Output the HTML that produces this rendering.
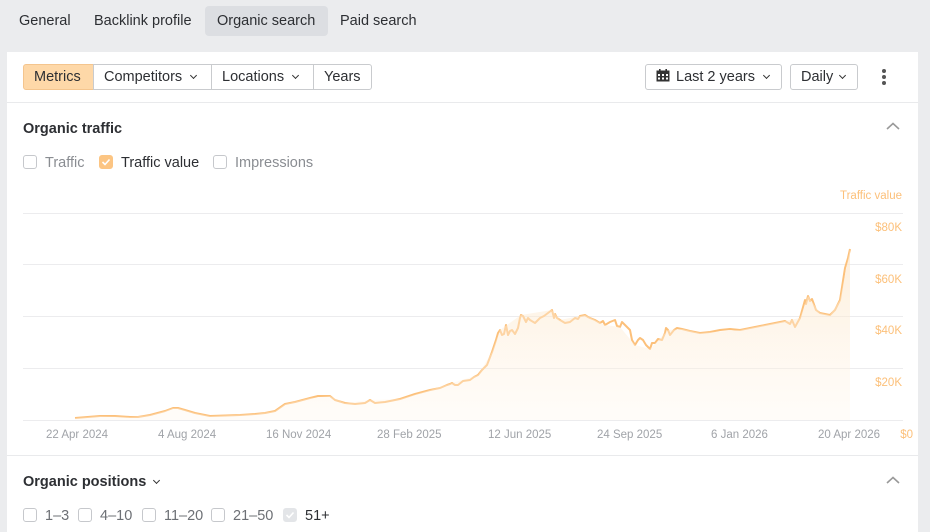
<!DOCTYPE html>
<html><head><meta charset="utf-8"><style>
*{box-sizing:border-box;margin:0;padding:0}
body{width:930px;height:528px;overflow:hidden;background:#ebecee;font-family:"Liberation Sans",Arial,sans-serif;color:#2d2f33;position:relative}
.tab{position:absolute;top:6px;height:30px;line-height:31px;font-size:14.5px;padding:0 12px;border-radius:4px;color:#2d2f33}
.card{position:absolute;left:7px;top:52px;width:911px;height:480px;background:#fff}
.btn{position:absolute;top:64px;height:26px;border:1px solid #c9cbce;font-size:14.5px;line-height:25px;background:#fff;padding:0 10px;color:#2d2f33;white-space:nowrap}
.chev{display:inline-block;width:5px;height:5px;border-right:1.3px solid #333;border-bottom:1.3px solid #333;transform:rotate(45deg);margin-left:9px;position:relative;top:-3px}
.hr{position:absolute;left:7px;width:911px;height:1px;background:#e9eaec}
.t{position:absolute;font-size:14.5px;white-space:nowrap}
.cb{position:absolute;width:14px;height:14px;border:1px solid #c6c8cc;border-radius:3px;background:#fff}
.ax{position:absolute;font-size:11.5px;color:#a0a3a8}
.yl{position:absolute;right:28px;font-size:11.5px;color:#fcc07a;text-align:right}
</style></head><body>
<div class="tab" style="left:7px">General</div>
<div class="tab" style="left:82px">Backlink profile</div>
<div class="tab" style="left:205px;width:123px;background:#dcdee2">Organic search</div>
<div class="tab" style="left:328px">Paid search</div>
<div class="card"></div>
<div class="btn" style="left:23px;width:71px;background:#fed8a8;border-color:#f4c58e;border-radius:3px 0 0 3px">Metrics</div>
<div class="btn" style="left:93px;width:119px">Competitors<span class="chev"></span></div>
<div class="btn" style="left:211px;width:103px">Locations<span class="chev"></span></div>
<div class="btn" style="left:313px;width:59px;border-radius:0 3px 3px 0">Years</div>
<div class="btn" style="left:645px;width:137px;border-radius:3px;padding-left:10px"><svg width="14" height="13" style="position:relative;top:1px;margin-right:6px" viewBox="0 0 14 13"><rect x="0.5" y="1.5" width="13" height="11" fill="#333"/><rect x="3" y="0" width="1.6" height="3" fill="#333"/><rect x="9.4" y="0" width="1.6" height="3" fill="#333"/><g fill="#fff"><rect x="2" y="5" width="2" height="2"/><rect x="6" y="5" width="2" height="2"/><rect x="10" y="5" width="2" height="2"/><rect x="2" y="8.5" width="2" height="2"/><rect x="6" y="8.5" width="2" height="2"/><rect x="10" y="8.5" width="2" height="2"/></g></svg>Last 2 years<span class="chev"></span></div>
<div class="btn" style="left:790px;width:68px;border-radius:3px">Daily<span class="chev" style="margin-left:7px"></span></div>
<div style="position:absolute;left:882px;top:69px;width:4px"><div style="width:4px;height:4px;border-radius:2px;background:#555;margin-bottom:2px"></div><div style="width:4px;height:4px;border-radius:2px;background:#555;margin-bottom:2px"></div><div style="width:4px;height:4px;border-radius:2px;background:#555"></div></div>
<div class="hr" style="top:102px"></div>
<div class="t" style="left:23px;top:121px;font-weight:bold">Organic traffic</div>
<svg style="position:absolute;left:886px;top:122px" width="14" height="9"><path d="M1 7 L7 1.5 L13 7" fill="none" stroke="#999" stroke-width="1.6"/></svg>
<div class="cb" style="left:23px;top:155px"></div><div class="t" style="left:45px;top:155px;color:#8a8d92">Traffic</div>
<div class="cb" style="left:99px;top:155px;background:#fcc583;border-color:#fcc583"><svg width="12" height="12" style="position:absolute;left:0;top:0"><path d="M2.5 6 L5 8.5 L9.5 3.5" fill="none" stroke="#fff" stroke-width="1.6"/></svg></div><div class="t" style="left:121px;top:155px">Traffic value</div>
<div class="cb" style="left:213px;top:155px"></div><div class="t" style="left:235px;top:155px;color:#8a8d92">Impressions</div>
<div class="yl" style="top:190px">Traffic value</div>
<div class="yl" style="top:222px">$80K</div>
<div class="yl" style="top:274px">$60K</div>
<div class="yl" style="top:325px">$40K</div>
<div class="yl" style="top:377px">$20K</div>
<div class="yl" style="top:429px;right:17px">$0</div>
<svg style="position:absolute;left:0;top:0" width="930" height="528">
<defs><linearGradient id="g" x1="0" y1="0" x2="0" y2="1"><stop offset="0" stop-color="#fde3c2" stop-opacity="0.6"/><stop offset="1" stop-color="#fff6ea" stop-opacity="0.3"/></linearGradient></defs>
<g stroke="#ececee" stroke-width="1"><line x1="23" y1="213.5" x2="903" y2="213.5"/><line x1="23" y1="264.5" x2="903" y2="264.5"/><line x1="23" y1="316.5" x2="903" y2="316.5"/><line x1="23" y1="368.5" x2="903" y2="368.5"/><line x1="23" y1="420.5" x2="903" y2="420.5"/></g>
<path d="M75,418 L100,416 L115,416 L130,417 L138,417 L150,415 L165,411 L173,408 L178,408 L185,410 L195,413 L210,416 L240,415 L255,414 L265,413 L275,411 L285,404 L295,402 L310,398 L318,396 L330,396 L335,400 L345,403 L355,404 L365,403 L370,400 L375,403 L385,402 L390,401 L400,399 L415,394 L430,390 L440,388 L447,385 L450,384 L452,383 L455,385 L458,385 L463,381 L470,380 L474,377 L478,375 L482,370 L487,365 L492,352 L496,340 L498,333 L500,330 L502,335 L504,334 L506,325 L508,335 L510,331 L512,330 L515,334 L518,328 L520,318 L521,315 L523,316 L526,322 L528,318 L530,320 L535,323 L538,320 L540,318 L544,316 L548,313 L552,310 L554,318 L555,314 L557,318 L560,320 L565,323 L570,322 L575,318 L578,319 L580,316 L585,315 L588,317 L590,318 L595,320 L600,323 L603,321 L605,325 L610,322 L615,320 L617,326 L620,327 L622,322 L625,325 L630,330 L632,340 L635,345 L638,340 L640,338 L643,340 L646,345 L650,349 L652,343 L655,343 L658,339 L662,340 L665,333 L666,328 L668,330 L670,335 L674,330 L677,328 L682,329 L690,331 L700,333 L710,332 L720,330 L730,329 L740,330 L750,328 L760,326 L765,325 L770,324 L775,323 L780,322 L785,321 L790,324 L792,320 L795,327 L800,318 L805,300 L806,304 L808,296 L810,301 L812,299 L816,310 L820,313 L830,315 L835,310 L840,300 L845,268 L848,258 L850,249" fill="none" stroke="#fcc07a" stroke-width="2" stroke-linejoin="round"/>
<path d="M75,418 L100,416 L130,417 L150,415 L165,411 L173,408 L178,408 L195,413 L210,416 L255,414 L275,411 L285,404 L310,398 L330,396 L345,403 L370,400 L400,399 L430,390 L452,383 L478,375 L492,352 L500,330 L521,315 L552,310 L560,320 L585,315 L605,325 L620,327 L635,345 L650,349 L668,330 L682,329 L700,333 L740,330 L785,321 L800,318 L808,296 L820,313 L830,315 L840,300 L850,249 L850,420 L75,420 Z" fill="url(#g)"/>
</svg>
<div class="ax" style="left:46px;top:429px">22 Apr 2024</div>
<div class="ax" style="left:158px;top:429px">4 Aug 2024</div>
<div class="ax" style="left:266px;top:429px">16 Nov 2024</div>
<div class="ax" style="left:377px;top:429px">28 Feb 2025</div>
<div class="ax" style="left:488px;top:429px">12 Jun 2025</div>
<div class="ax" style="left:597px;top:429px">24 Sep 2025</div>
<div class="ax" style="left:711px;top:429px">6 Jan 2026</div>
<div class="ax" style="left:818px;top:429px">20 Apr 2026</div>
<div class="hr" style="top:455px"></div>
<div class="t" style="left:23px;top:474px;font-weight:bold">Organic positions<span class="chev" style="margin-left:8px"></span></div>
<svg style="position:absolute;left:886px;top:476px" width="14" height="9"><path d="M1 7 L7 1.5 L13 7" fill="none" stroke="#999" stroke-width="1.6"/></svg>
<div class="cb" style="left:23px;top:508px"></div><div class="t" style="left:45px;top:508px;color:#6d7075">1–3</div>
<div class="cb" style="left:78px;top:508px"></div><div class="t" style="left:100px;top:508px;color:#6d7075">4–10</div>
<div class="cb" style="left:142px;top:508px"></div><div class="t" style="left:164px;top:508px;color:#6d7075">11–20</div>
<div class="cb" style="left:211px;top:508px"></div><div class="t" style="left:233px;top:508px;color:#6d7075">21–50</div>
<div class="cb" style="left:283px;top:508px;background:#e3e5e8;border-color:#e3e5e8"><svg width="12" height="12" style="position:absolute;left:0;top:0"><path d="M2.5 6 L5 8.5 L9.5 3.5" fill="none" stroke="#fff" stroke-width="1.6"/></svg></div><div class="t" style="left:305px;top:508px">51+</div>
</body></html>
